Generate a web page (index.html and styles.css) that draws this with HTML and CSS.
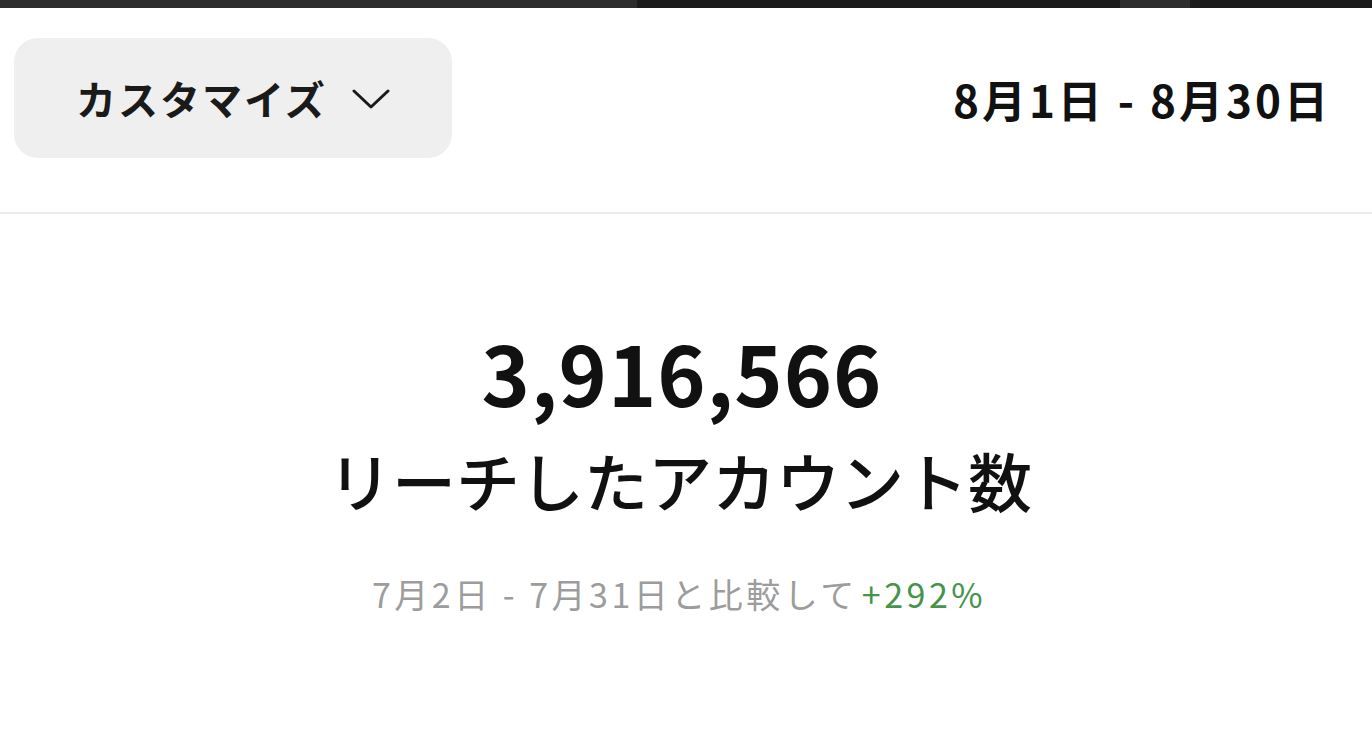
FILE: index.html
```html
<!DOCTYPE html>
<html lang="ja">
<head>
    <meta charset="utf-8">
    <title>インサイト</title>
    <link rel="stylesheet" href="styles.css">
</head>
<body>
    <div class="topStrip">
        <div class="strip-part light" style="width: 637px"></div>
        <div class="strip-part dark" style="width: 483px"></div>
        <div class="strip-part light" style="width: 70px"></div>
        <div class="strip-part dark grow"></div>
    </div>
    <div class="header">
        <button class="customize">
            <span>カスタマイズ</span>
            <svg class="chevron" width="38" height="22" viewBox="0 0 38 22">
                <path d="M2 3 L19 19 L36 3" fill="none" stroke="#1a1a1a" stroke-width="3" stroke-linecap="round" stroke-linejoin="round"/>
            </svg>
        </button>
        <div class="dateRange">8月1日 - 8月30日</div>
    </div>
    <div class="summary">
        <div class="bigNumber">3,916,566</div>
        <div class="metricLabel">リーチしたアカウント数</div>
        <div class="compare">7月2日 - 7月31日と比較して<span class="up">+292%</span></div>
    </div>
</body>
</html>
```

FILE: styles.css
```css
body {
    margin: 0;
    background-color: #fff;
    font-family: "Noto Sans CJK JP", "Noto Sans", sans-serif;
    color: #111;
}
.topStrip {
    display: flex;
    height: 8px;
}
.strip-part.light {
    background-color: #2d2d2d;
}
.strip-part.dark {
    background-color: #1b1b1b;
}
.strip-part.grow {
    flex: 1;
}
.header {
    display: flex;
    justify-content: space-between;
    align-items: flex-start;
    height: 206px;
    border-bottom: 2px solid #ebebeb;
    padding: 30px 41px 0 14px;
    box-sizing: border-box;
}
.customize {
    display: flex;
    align-items: center;
    gap: 25px;
    width: 438px;
    height: 120px;
    padding: 0 0 0 62px;
    border: none;
    border-radius: 24px;
    background-color: #efefef;
    font-family: inherit;
    font-size: 40px;
    font-weight: 700;
    letter-spacing: 2px;
    color: #1a1a1a;
    cursor: pointer;
}
.chevron {
    margin-top: 2px;
}
.dateRange {
    margin-top: 31px;
    font-size: 44px;
    font-weight: 700;
    letter-spacing: 3px;
    color: #111;
    line-height: 1.4;
}
.summary {
    display: flex;
    flex-direction: column;
    align-items: center;
    padding-top: 109px;
}
.bigNumber {
    margin-right: 8px;
    font-size: 82px;
    font-weight: 700;
    letter-spacing: 1px;
    line-height: 1.2;
}
.metricLabel {
    margin-top: 20px;
    margin-right: 12px;
    font-size: 64px;
    font-weight: 500;
    line-height: 1.2;
}
.compare {
    margin-top: 52px;
    margin-right: 14px;
    font-size: 34px;
    letter-spacing: 3.5px;
    color: #9c9c9c;
    line-height: 1.4;
}
.compare .up {
    color: #45944a;
    margin-left: 4px;
}
```
